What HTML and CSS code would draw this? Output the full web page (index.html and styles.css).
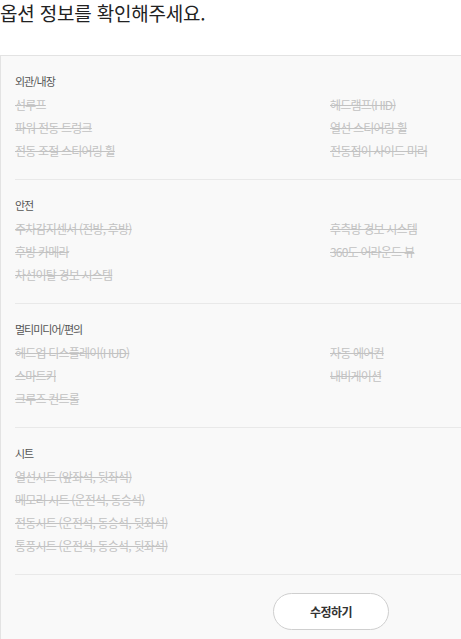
FILE: index.html
```html
<!DOCTYPE html>
<html lang="ko">
<head>
<meta charset="utf-8">
<title>옵션 정보</title>
<link rel="stylesheet" href="styles.css">
</head>
<body>
<h2 class="title">옵션 정보를 확인해주세요.</h2>
<div class="option-box">
  <section class="group">
    <h3 class="group-title">외관/내장</h3>
    <ul class="items">
      <li>선루프</li><li>헤드램프(HID)</li>
      <li>파워 전동 트렁크</li><li>열선 스티어링 휠</li>
      <li>전동 조절 스티어링 휠</li><li>전동접이 사이드 미러</li>
    </ul>
  </section>
  <section class="group">
    <h3 class="group-title">안전</h3>
    <ul class="items">
      <li>주차감지센서 (전방, 후방)</li><li>후측방 경보 시스템</li>
      <li>후방 카메라</li><li>360도 어라운드 뷰</li>
      <li>차선이탈 경보 시스템</li>
    </ul>
  </section>
  <section class="group">
    <h3 class="group-title">멀티미디어/편의</h3>
    <ul class="items">
      <li>헤드업 디스플레이(HUD)</li><li>자동 에어컨</li>
      <li>스마트키</li><li>내비게이션</li>
      <li>크루즈 컨트롤</li>
    </ul>
  </section>
  <section class="group">
    <h3 class="group-title">시트</h3>
    <ul class="items">
      <li>열선시트 (앞좌석, 뒷좌석)</li><li class="empty"></li>
      <li>메모리 시트 (운전석, 동승석)</li><li class="empty"></li>
      <li>전동시트 (운전석, 동승석, 뒷좌석)</li><li class="empty"></li>
      <li>통풍시트 (운전석, 동승석, 뒷좌석)</li><li class="empty"></li>
    </ul>
  </section>
  <div class="actions">
    <button class="edit-btn" type="button">수정하기</button>
  </div>
</div>
</body>
</html>
```
FILE: styles.css
```css
html, body {
  margin: 0;
  padding: 0;
  background: #ffffff;
  overflow: hidden;
}
body {
  font-family: "Noto Sans CJK KR", "Noto Sans", sans-serif;
  color: #222;
}
.title {
  margin: 0;
  font-size: 19px;
  font-weight: 400;
  line-height: 26px;
  letter-spacing: -0.2px;
  color: #222;
}
.option-box {
  margin-top: 29px;
  background: #f9f9f9;
  border: 1px solid #e3e3e3;
  border-right: 0;
  padding-bottom: 20px;
}
.group {
  margin-left: 14px;
  padding: 18px 0 17px;
  border-bottom: 1px solid #e9e9e9;
}
.group-title {
  margin: 0 0 5px;
  font-size: 11px;
  line-height: 14px;
  font-weight: 400;
  letter-spacing: -1px;
  color: #555;
}
.items {
  list-style: none;
  margin: 0;
  padding: 0;
  display: grid;
  grid-template-columns: 315px 1fr;
}
.items li {
  font-size: 12px;
  line-height: 23px;
  letter-spacing: -0.8px;
  color: #c2c2c2;
  text-decoration: line-through;
  white-space: nowrap;
}
.actions {
  display: flex;
  padding: 18px 0 0 272px;
}
.edit-btn {
  width: 116px;
  height: 37px;
  border: 1px solid #cfcfcf;
  border-radius: 19px;
  background: #fff;
  font-family: inherit;
  font-size: 12px;
  font-weight: 700;
  letter-spacing: -0.5px;
  color: #333;
  cursor: pointer;
}
```
